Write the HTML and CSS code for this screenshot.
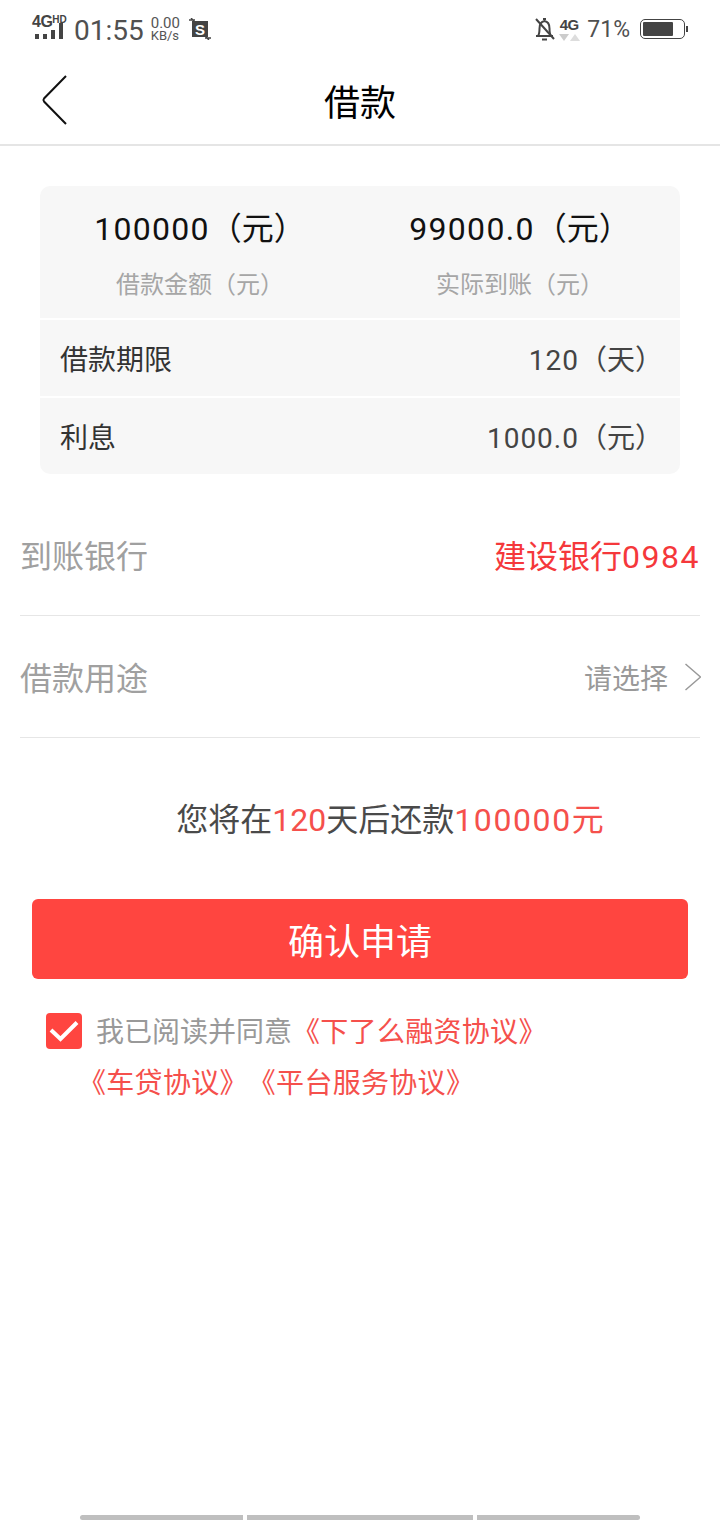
FILE: index.html
```html
<!DOCTYPE html>
<html lang="zh">
<head>
<meta charset="utf-8">
<title>借款</title>
<link rel="stylesheet" href="styles.css">
</head>
<body>
<div class="screen">
  <div class="status">
    <div class="status-left">
      <div class="signal">
        <div class="net"><span class="g4">4G</span><span class="hd">HD</span></div>
        <div class="bars"><i class="b1"></i><i class="b1"></i><i class="b2"></i><i class="b3"></i></div>
      </div>
      <span class="time">01:55</span>
      <div class="speed"><span class="sp-top">0.00</span><span class="sp-bot">KB/s</span></div>
      <svg class="shot" width="22" height="22" viewBox="0 0 22 22">
        <rect x="3" y="3" width="16" height="16" fill="#444"/>
        <path d="M0 2h6M2 0l3 3M16 20h6M17 19l3 3" stroke="#444" stroke-width="1.400" fill="none"/>
        <text x="11" y="16.500" class="shot-s">S</text>
      </svg>
    </div>
    <div class="status-right">
      <svg class="bell" width="22" height="24" viewBox="0 0 22 24">
        <path d="M2 19h17M4 19c1.500-2 1.500-4.500 1.500-7.500 0-4 2-7 5-7.500 3 .5 5 3.500 5 7.500 0 3 0 5.500 1.500 7.500M9 2h3M8 22.500h5" stroke="#444" stroke-width="2" fill="none"/>
        <path d="M2 2l18 20" stroke="#444" stroke-width="2"/>
      </svg>
      <div class="net2">
        <span class="g4b">4G</span>
        <div class="arrows"><i class="down"></i><i class="up"></i></div>
      </div>
      <span class="pct">71%</span>
      <div class="battery"><div class="shell"><div class="fill"></div></div><i class="cap"></i></div>
    </div>
  </div>

  <header class="nav">
    <svg class="back" width="28" height="52" viewBox="0 0 28 52">
      <path d="M25 2L3 24.500q-1.200 1.500 0 3L25 50" stroke="#111" stroke-width="2" fill="none"/>
    </svg>
    <h1>借款</h1>
  </header>

  <section class="card">
    <div class="summary">
      <div class="col">
        <div class="amount"><span class="num">100000</span>（元）</div>
        <div class="caption">借款金额（元）</div>
      </div>
      <div class="col">
        <div class="amount"><span class="num">99000.0</span>（元）</div>
        <div class="caption">实际到账（元）</div>
      </div>
    </div>
    <div class="row"><span>借款期限</span><span class="val"><span class="num">120</span>（天）</span></div>
    <div class="row"><span>利息</span><span class="val"><span class="num">1000.0</span>（元）</span></div>
  </section>

  <section class="form">
    <div class="field">
      <span class="label">到账银行</span>
      <span class="bank">建设银行<span class="num">0984</span></span>
    </div>
    <div class="field">
      <span class="label">借款用途</span>
      <span class="pick">请选择
        <svg width="16" height="28" viewBox="0 0 16 28"><path d="M.5 1l15 13L.5 27" stroke="#999" stroke-width="1.500" fill="none"/></svg>
      </span>
    </div>
  </section>

  <p class="notice">您将在<em>120</em>天后还款<em class="num">100000</em><em>元</em></p>

  <button class="submit">确认申请</button>

  <div class="agree">
    <div class="agree-first">
      <span class="check">
        <svg width="36" height="36" viewBox="0 0 36 36"><path d="M5 17l9.500 9L31 9.500" stroke="#fff" stroke-width="4" fill="none"/></svg>
      </span>
      <span class="agree-text">我已阅读并同意<em class="agree-red">《下了么融资协议》</em></span>
    </div>
    <div class="agree-second">《车贷协议》《平台服务协议》</div>
  </div>

  <div class="spacer"></div>

  <div class="home"><i class="h-left"></i><i class="h-mid"></i><i class="h-right"></i></div>
</div>
</body>
</html>
```
FILE: styles.css
```css
* { box-sizing: border-box; margin: 0; padding: 0; }
html, body { width: 720px; height: 1520px; background: #fff; overflow: hidden; }
body { font-family: Roboto, "Noto Sans CJK SC", sans-serif; color: #333; text-spacing-trim: space-all; }
em { font-style: normal; }
i { display: block; }
.num { letter-spacing: 1.300px; }
.screen { width: 720px; height: 1520px; display: flex; flex-direction: column; }

.status { height: 56px; padding: 2px 32px 0 32px; display: flex; justify-content: space-between; align-items: center; color: #444; }
.status-left, .status-right { display: flex; align-items: center; }
.signal { width: 34px; margin-top: -4px; }
.net { display: flex; align-items: flex-start; height: 13px; font-family: "Liberation Sans", sans-serif; font-weight: 700; }
.g4 { font-size: 16px; line-height: 14px; letter-spacing: -0.5px; }
.hd { font-size: 10px; line-height: 10px; }
.bars { display: flex; align-items: flex-end; gap: 4px; height: 11px; margin-left: 3px; }
.bars i { width: 4px; background: #444; }
.b1 { height: 5px; }
.b2 { height: 9px; }
.b3 { height: 16px; }
.time { font-size: 28px; line-height: 32px; margin: 4px 0 0 8px; color: #505050; }
.speed { display: flex; flex-direction: column; margin-left: 7px; color: #555; }
.sp-top { font-size: 15px; line-height: 14px; }
.sp-bot { font-size: 13px; line-height: 12px; }
.shot { margin-left: 9px; }
.shot-s { font: 700 15px "Liberation Sans", sans-serif; fill: #fff; text-anchor: middle; }
.net2 { width: 20px; margin-left: 3px; display: flex; flex-direction: column; align-items: center; }
.g4b { font: 700 15px/15px "Liberation Sans", sans-serif; letter-spacing: -0.5px; }
.arrows { display: flex; gap: 1px; margin-top: 2px; }
.down { border: 5px solid transparent; border-top: 7px solid #ccc; border-bottom: 0; }
.up { border: 5px solid transparent; border-bottom: 7px solid #ddd; border-top: 0; }
.pct { font-size: 23px; margin-left: 8px; color: #505050; }
.battery { display: flex; align-items: center; margin-left: 10px; }
.shell { width: 45px; height: 20px; border: 1.500px solid #444; border-radius: 5px; padding: 2px; }
.fill { width: 30px; height: 100%; background: #444; border-radius: 1px; }
.cap { width: 2px; height: 6px; background: #444; margin-left: 1px; }

.nav { height: 90px; border-bottom: 2px solid #e5e5e5; display: flex; align-items: center; justify-content: center; position: relative; }
.nav h1 { font-size: 36px; font-weight: 400; color: #000; line-height: 50px; margin-top: 7px; }
.back { position: absolute; left: 41px; top: 18px; }

.card { margin: 40px 40px 0; background: #f7f7f7; border-radius: 10px; }
.summary { height: 134px; border-bottom: 2px solid #fff; display: flex; }
.col { flex: 1; padding-top: 20px; text-align: center; }
.amount { font-size: 32px; line-height: 46px; color: #111; }
.caption { font-size: 24px; line-height: 34px; margin-top: 16px; color: #a6a6a6; }
.row { height: 76px; padding: 0 20px; display: flex; justify-content: space-between; align-items: center; font-size: 28px; color: #333; }
.row + .row { border-top: 2px solid #fff; height: 78px; }
.val { color: #444; margin-right: -3px; }
.val .num { letter-spacing: 1px; }

.form { margin: 20px 20px 0; }
.field { height: 122px; border-bottom: 1px solid #e6e6e6; display: flex; justify-content: space-between; align-items: center; }
.label { font-size: 32px; color: #a0a0a0; margin-top: -2px; }
.bank { font-size: 32px; color: #f5383b; margin-top: -2px; }
.bank .num { letter-spacing: 1.500px; }
.pick { display: flex; align-items: center; gap: 17px; margin-right: -1px; font-size: 28px; color: #999; }

.notice { margin-top: 60px; padding-left: 60px; height: 44px; line-height: 44px; font-size: 32px; text-align: center; color: #4a4a4a; }
.notice em { color: #f5504c; }
.notice .num { letter-spacing: 1.600px; }

.submit { display: block; margin: 57px 32px 0; width: 656px; height: 80px; background: #ff4540; border: 0; border-radius: 6px; font: 400 36px "Noto Sans CJK SC", sans-serif; color: #fff; }

.agree { margin-top: 27px; font-size: 28px; line-height: 50px; }
.agree-first { display: flex; align-items: flex-start; padding-left: 46px; }
.check { width: 36px; height: 36px; margin-top: 7px; border-radius: 4px; background: #ff4540; display: block; }
.check svg { display: block; }
.agree-text { margin: 2px 0 0 14px; color: #999; }
.agree-red { color: #f5504c; letter-spacing: 0.300px; }
.agree-second { padding-left: 78px; margin-top: 1px; color: #f5504c; letter-spacing: 0.300px; }

.spacer { flex: 1; }
.home { height: 5px; padding: 0 80px; display: flex; gap: 4px; }
.home i { background: #bfbfbf; height: 5px; }
.h-left { width: 163px; border-radius: 3px 0 0 3px; }
.h-mid { width: 226px; }
.h-right { width: 163px; border-radius: 0 3px 3px 0; }
```
